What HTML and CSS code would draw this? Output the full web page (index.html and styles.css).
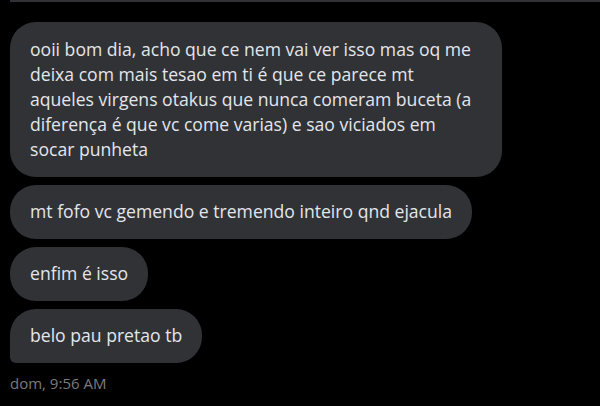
FILE: index.html
```html
<!DOCTYPE html>
<html>
<head>
<meta charset="utf-8">
<link rel="stylesheet" href="styles.css">
</head>
<body>
<div class="chat">
  <div class="prev"></div>
  <div class="group">
    <div class="bubble first">ooii bom dia, acho que ce nem vai ver isso mas oq me deixa com mais tesao em ti é que ce parece mt aqueles virgens otakus que nunca comeram buceta (a diferença é que vc come varias) e sao viciados em socar punheta</div>
    <div class="bubble">mt fofo vc gemendo e tremendo inteiro qnd ejacula</div>
    <div class="bubble">enfim é isso</div>
    <div class="bubble last">belo pau pretao tb</div>
  </div>
  <div class="time">dom, 9:56 AM</div>
</div>
</body>
</html>
```
FILE: styles.css
```css
html, body {
  margin: 0;
  padding: 0;
  background: #000;
}
body {
  width: 600px;
  height: 406px;
  overflow: hidden;
  font-family: "Open Sans", "Noto Sans", sans-serif;
}
.chat {
  padding-left: 10px;
  display: flex;
  flex-direction: column;
}
.prev {
  height: 2px;
  background: #303236;
  margin-bottom: 20px;
}
.group {
  display: flex;
  flex-direction: column;
  align-items: flex-start;
  gap: 8px;
}
.bubble {
  background: #303236;
  color: #e4e6eb;
  font-size: 17.6px;
  line-height: 25px;
  padding: 14px 20px 15px;
  border-radius: 26px;
  max-width: 452px;
}
.bubble.first {
  width: 452px;
  padding: 15px 20px 15px;
}
.bubble.last {
  border-bottom-left-radius: 6px;
}
.time {
  margin-top: 11px;
  color: #7a7b7e;
  font-size: 15px;
  line-height: 18px;
}
```
